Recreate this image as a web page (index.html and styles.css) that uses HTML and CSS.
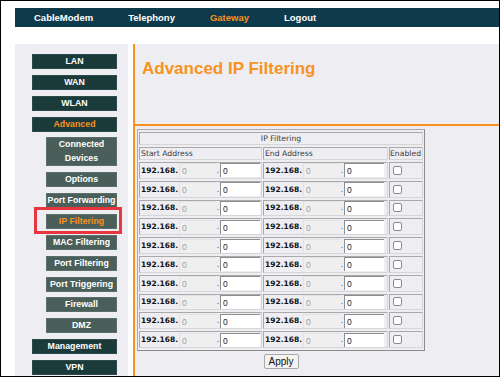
FILE: index.html
```html
<!DOCTYPE html>
<html>
<head>
<meta charset="utf-8">
<link rel="stylesheet" href="styles.css">
</head>
<body>
<div class="frame">
  <div class="topnav">
    <span class="tab">CableModem</span>
    <span class="tab">Telephony</span>
    <span class="tab active">Gateway</span>
    <span class="tab">Logout</span>
  </div>
  <div class="layout">
    <nav class="side">
      <a class="btn top">LAN</a>
      <a class="btn top">WAN</a>
      <a class="btn top">WLAN</a>
      <a class="btn top on">Advanced</a>
      <a class="btn sub two">Connected<br>Devices</a>
      <a class="btn sub">Options</a>
      <a class="btn sub">Port Forwarding</a>
      <a class="btn sub on current">IP Filtering<span class="highlight"></span></a>
      <a class="btn sub">MAC Filtering</a>
      <a class="btn sub">Port Filtering</a>
      <a class="btn sub">Port Triggering</a>
      <a class="btn sub">Firewall</a>
      <a class="btn sub">DMZ</a>
      <a class="btn top">Management</a>
      <a class="btn top">VPN</a>
    </nav>
    <main class="main">
      <div class="head"><h1 class="title">Advanced IP Filtering</h1></div>
      <div class="content">
        <table class="grid">
          <colgroup><col class="c1"><col class="c2"><col class="c3"></colgroup>
          <tr><td class="caption" colspan="3">IP Filtering</td></tr>
          <tr class="labels"><td>Start Address</td><td>End Address</td><td class="en">Enabled</td></tr>
          <tr class="row"><td><div class="ip"><b>192.168.</b><span class="octet dis">0</span><span class="dot">.</span><span class="octet">0</span></div></td><td><div class="ip"><b>192.168.</b><span class="octet dis">0</span><span class="dot">.</span><span class="octet">0</span></div></td><td><span class="check"></span></td></tr>
          <tr class="row"><td><div class="ip"><b>192.168.</b><span class="octet dis">0</span><span class="dot">.</span><span class="octet">0</span></div></td><td><div class="ip"><b>192.168.</b><span class="octet dis">0</span><span class="dot">.</span><span class="octet">0</span></div></td><td><span class="check"></span></td></tr>
          <tr class="row"><td><div class="ip"><b>192.168.</b><span class="octet dis">0</span><span class="dot">.</span><span class="octet">0</span></div></td><td><div class="ip"><b>192.168.</b><span class="octet dis">0</span><span class="dot">.</span><span class="octet">0</span></div></td><td><span class="check"></span></td></tr>
          <tr class="row"><td><div class="ip"><b>192.168.</b><span class="octet dis">0</span><span class="dot">.</span><span class="octet">0</span></div></td><td><div class="ip"><b>192.168.</b><span class="octet dis">0</span><span class="dot">.</span><span class="octet">0</span></div></td><td><span class="check"></span></td></tr>
          <tr class="row"><td><div class="ip"><b>192.168.</b><span class="octet dis">0</span><span class="dot">.</span><span class="octet">0</span></div></td><td><div class="ip"><b>192.168.</b><span class="octet dis">0</span><span class="dot">.</span><span class="octet">0</span></div></td><td><span class="check"></span></td></tr>
          <tr class="row"><td><div class="ip"><b>192.168.</b><span class="octet dis">0</span><span class="dot">.</span><span class="octet">0</span></div></td><td><div class="ip"><b>192.168.</b><span class="octet dis">0</span><span class="dot">.</span><span class="octet">0</span></div></td><td><span class="check"></span></td></tr>
          <tr class="row"><td><div class="ip"><b>192.168.</b><span class="octet dis">0</span><span class="dot">.</span><span class="octet">0</span></div></td><td><div class="ip"><b>192.168.</b><span class="octet dis">0</span><span class="dot">.</span><span class="octet">0</span></div></td><td><span class="check"></span></td></tr>
          <tr class="row"><td><div class="ip"><b>192.168.</b><span class="octet dis">0</span><span class="dot">.</span><span class="octet">0</span></div></td><td><div class="ip"><b>192.168.</b><span class="octet dis">0</span><span class="dot">.</span><span class="octet">0</span></div></td><td><span class="check"></span></td></tr>
          <tr class="row"><td><div class="ip"><b>192.168.</b><span class="octet dis">0</span><span class="dot">.</span><span class="octet">0</span></div></td><td><div class="ip"><b>192.168.</b><span class="octet dis">0</span><span class="dot">.</span><span class="octet">0</span></div></td><td><span class="check"></span></td></tr>
          <tr class="row"><td><div class="ip"><b>192.168.</b><span class="octet dis">0</span><span class="dot">.</span><span class="octet">0</span></div></td><td><div class="ip"><b>192.168.</b><span class="octet dis">0</span><span class="dot">.</span><span class="octet">0</span></div></td><td><span class="check"></span></td></tr>
        </table>
        <div class="actions"><button class="apply">Apply</button></div>
      </div>
    </main>
  </div>
</div>
</body>
</html>
```
FILE: styles.css
```css
html, body { margin: 0; padding: 0; background: #fff; }
.frame {
  width: 500px; height: 377px; box-sizing: border-box;
  border: 1px solid #000; padding-top: 7px; overflow: hidden;
  font-family: "Liberation Sans", Arial, sans-serif;
}
.topnav {
  margin-left: 14px; height: 19px; background: #0f3a4b;
  display: flex; gap: 35px; padding-left: 19px; align-items: center;
}
.tab { color: #fff; font-weight: bold; font-size: 9.5px; line-height: 19px; }
.tab.active { color: #f7931e; }

.layout { display: flex; margin-top: 17px; padding-left: 14px; height: 332px; }
.side {
  width: 113px; flex: none; background: #eeedf2;
  display: flex; flex-direction: column; gap: 5.86px;
  padding: 10px 0 0 17px; box-sizing: border-box;
}
.btn {
  display: block; position: relative; height: 15px; flex: none;
  text-align: center; color: #fff; font-weight: bold; font-size: 8.8px;
  box-sizing: border-box; white-space: nowrap;
}
.btn.top { width: 85px; background: #1b3a3a; border: 1px solid #2c4a4a; line-height: 13px; }
.btn.sub { width: 71px; margin-left: 14px; background: #4b5f5a; border: 1px solid #5b6e6a; line-height: 13px; }
.btn.two { height: 29px; line-height: 13.5px; }
.btn.on { color: #f7931e; }
.highlight {
  position: absolute; left: -13px; top: -8px; width: 88px; height: 27px;
  border: 3px solid #e8363f; box-sizing: border-box;
}

.main { flex: 1; margin-left: 5px; background: #eeedf2; border-left: 2px solid #f7931e; }
.head { height: 80px; border-bottom: 2px solid #f7931e; }
.title {
  margin: 0; padding: 15px 0 0 7px; color: #f7931e;
  font-size: 17px; line-height: 20px; font-weight: bold;
}
.content { padding: 3px 0 0 2px; }

.grid {
  width: 288px; border-collapse: separate; border-spacing: 1px 2px;
  border: 1px solid #a9a9a9; border-right-color: #8c8c8c; border-bottom-color: #8c8c8c;
  font-family: "DejaVu Sans", Verdana, sans-serif; font-size: 7.7px; color: #3a3a3a;
  table-layout: fixed;
}
.c1 { width: 123px; }
.c2 { width: 125px; }
.c3 { width: 34px; }
.grid td {
  border: 1px solid #a9a9a9; border-right-color: #d6d6d6; border-bottom-color: #d6d6d6;
  padding: 0; background: #eeedf2; overflow: hidden;
}
.caption { height: 11px; text-align: center; line-height: 11px; }
.labels td { height: 11px; line-height: 11px; padding-left: 1px; }
.labels .en { padding-left: 0; }
.row td { height: 14.8px; }
.ip { display: flex; align-items: center; height: 14.8px; padding-left: 1px; }
.ip b { font-size: 7.5px; color: #111; width: 37px; flex: none; }
.octet {
  height: 14px; line-height: 14px; box-sizing: border-box; width: 40px; flex: none;
  background: #fff; color: #222; font-size: 8.5px; padding-left: 2px;
  font-family: "Liberation Sans", Arial, sans-serif;
  border-top: 1px solid #8d8d8d; border-left: 1px solid #8d8d8d;
}
.octet.dis {
  width: 37px; margin-left: 1px; background: #efeff0; color: #a0a0a0;
  border-top: 1px solid #e2e2e2; border-left: 1px solid #e2e2e2;
}
.dot { width: 4px; flex: none; text-align: center; color: #555; font-size: 8px; }
.check {
  display: block; width: 9px; height: 9px; margin-left: 3px; box-sizing: border-box;
  border: 1px solid #8a8a8a; border-radius: 2px; background: #fff;
}
.actions { width: 288px; text-align: center; margin-top: 0; }
.apply {
  width: 35px; height: 15px; padding: 0; font-family: "Liberation Sans", Arial, sans-serif;
  font-size: 10px; color: #111; background: #f3f3f3; border: 1px solid #a8a8a8; border-radius: 2px;
}
```
